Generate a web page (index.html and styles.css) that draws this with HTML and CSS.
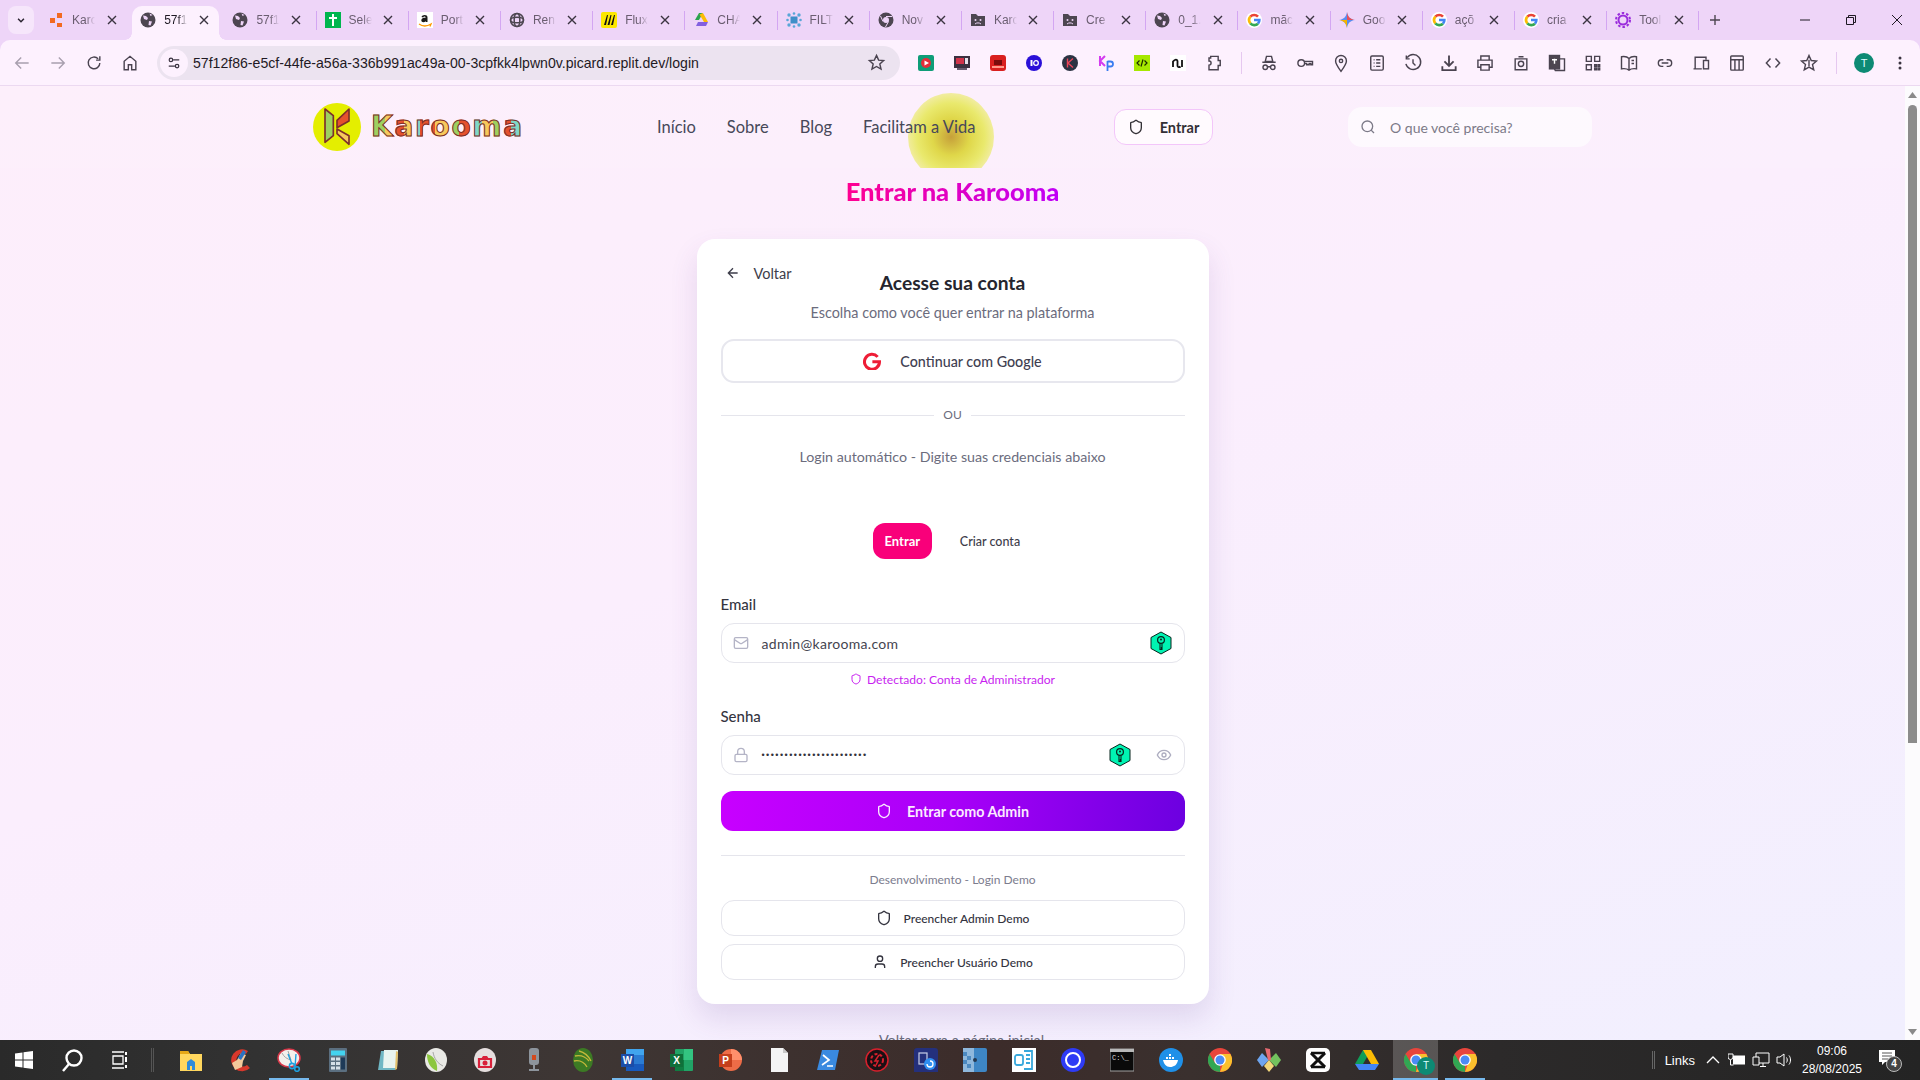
FILE: index.html
```html
<!DOCTYPE html>
<html lang="pt-BR">
<head>
<meta charset="utf-8">
<title>Entrar na Karooma</title>
<link rel="stylesheet" href="styles.css">
</head>
<body>
<svg class="defs" aria-hidden="true">
  <symbol id="shield" viewBox="0 0 24 24"><path fill="none" stroke="currentColor" stroke-width="2" d="M20 13c0 5-3.5 7.5-7.66 8.95a1 1 0 0 1-.67-.01C7.5 20.5 4 18 4 13V6a1 1 0 0 1 1-1c2 0 4.5-1.2 6.24-2.72a1.17 1.17 0 0 1 1.52 0C14.51 3.81 17 5 19 5a1 1 0 0 1 1 1z"/></symbol>
  <symbol id="globe" viewBox="0 0 16 16"><circle cx="8" cy="8" r="7.5" fill="#4d4651"/><path fill="#eed5f8" d="M3 3.5l3 .5 2 2-1 2-3-1zM9 9l3 .5-1.500 4-2-.5zM9.500 1.500l3 1.500-2 1z"/></symbol>
  <symbol id="gcol" viewBox="0 0 24 24"><circle cx="12" cy="12" r="12" fill="#fff"/><path fill="none" stroke="#ea4335" stroke-width="4" d="M18 7a8 8 0 0 0-11.500 0"/><path fill="none" stroke="#fbbc05" stroke-width="4" d="M6.500 7a8 8 0 0 0 0 10"/><path fill="none" stroke="#34a853" stroke-width="4" d="M6.500 17a8 8 0 0 0 11.500 .5"/><path fill="none" stroke="#4285f4" stroke-width="4" d="M18 17.500A8 8 0 0 0 20 12h-8"/></symbol>
  <symbol id="folder" viewBox="0 0 16 16"><path fill="#4d4651" d="M1 2h5l2 2h7v10H1z"/><circle cx="5.500" cy="8" r="1" fill="#eed5f8"/><circle cx="10.500" cy="8" r="1" fill="#eed5f8"/><path d="M5 12c1.500-1.500 4.500-1.500 6 0" stroke="#eed5f8" fill="none"/></symbol>
  <symbol id="x" viewBox="0 0 12 12"><path d="M2 2l8 8M10 2l-8 8" stroke="currentColor" stroke-width="1.400" fill="none"/></symbol>
  <symbol id="key" viewBox="0 0 22 24"><path d="M11 1l10 5.500v11L11 23 1 17.500v-11z" fill="#00f3b2" stroke="#06251d" stroke-width="1"/><circle cx="11" cy="9" r="3.400" fill="none" stroke="#06251d" stroke-width="1.200"/><circle cx="11" cy="8.500" r="1" fill="#06251d"/><path d="M10 12.500v6h2v-1h-.6v-1h.6v-4" fill="none" stroke="#06251d" stroke-width="1.100"/></symbol>
  <symbol id="chrome" viewBox="0 0 24 24"><circle cx="12" cy="12" r="12" fill="#e8453c"/><path d="M12 24A12 12 0 0 1 1.600 6L7 15l5 .5z" fill="#31a753"/><path d="M12 24A12 12 0 0 0 22.400 6H12l4 7z" fill="#fbc02d"/><circle cx="12" cy="12" r="5.800" fill="#fff"/><circle cx="12" cy="12" r="4.500" fill="#4b8bf5"/></symbol>
</svg>

<header class="tabstrip">
  <div class="tabmenu"><svg class="i10" viewBox="0 0 12 12"><path d="M2.500 4.500L6 8l3.500-3.500" stroke="#2a2430" stroke-width="1.800" fill="none"/></svg></div>
  <div class="tabs">
    <div class="tab"><svg class="fav" viewBox="0 0 16 16"><path fill="#f26a21" d="M2 6h5v5H2zM9 1h5v5H9zM9 11h5v4H9z"/></svg><span class="tt">Karc</span><svg class="cl"><use href="#x"/></svg></div>
    <div class="tab on"><svg class="fav"><use href="#globe"/></svg><span class="tt">57f1</span><svg class="cl"><use href="#x"/></svg></div>
    <div class="tab"><svg class="fav"><use href="#globe"/></svg><span class="tt">57f1</span><svg class="cl"><use href="#x"/></svg></div>
    <div class="tab"><svg class="fav" viewBox="0 0 16 16"><rect width="16" height="16" fill="#00b54f"/><path d="M7 2h2v3h3v2H9v7H7V7H4V5h3z" fill="#fff"/></svg><span class="tt">Sele</span><svg class="cl"><use href="#x"/></svg></div>
    <div class="tab"><svg class="fav" viewBox="0 0 16 16"><rect width="16" height="16" fill="#fff"/><path d="M4.500 5c.5-2.500 6-3 6 .5V10h-1.600l-.2-.8c-1.500 1.500-4.500 1.200-4.400-1 .1-2 2.500-2.500 4.300-2.400 0-1.600-2-1.500-2.500-.3z" fill="#1a1a1a"/><path d="M2 12c3.500 2.500 8 2.500 12 0l-1 2.500" stroke="#f90" fill="none" stroke-width="1.300"/></svg><span class="tt">Port</span><svg class="cl"><use href="#x"/></svg></div>
    <div class="tab"><svg class="fav" viewBox="0 0 16 16"><g fill="none" stroke="#4d4651" stroke-width="1.500"><circle cx="8" cy="8" r="6.500"/><ellipse cx="8" cy="8" rx="6.500" ry="2.800"/><ellipse cx="8" cy="8" rx="2.800" ry="6.500"/></g></svg><span class="tt">Ren</span><svg class="cl"><use href="#x"/></svg></div>
    <div class="tab"><svg class="fav" viewBox="0 0 16 16"><rect width="16" height="16" rx="2" fill="#fce800"/><path d="M3 13L6 3l1 0-2 10zM6.500 13L9.500 3l1 0-2 10zM10 13L13 3l1 0-2 10z" fill="#111"/></svg><span class="tt">Flux</span><svg class="cl"><use href="#x"/></svg></div>
    <div class="tab"><svg class="fav" viewBox="0 0 16 16"><path d="M6 1h4L6 8H2z" fill="#2aa34f"/><path d="M10 1l5 9h-4L6.500 2.500z" fill="#fbbc05"/><path d="M3 14l2-4h10l-2 4z" fill="#8360e0"/></svg><span class="tt">CHA</span><svg class="cl"><use href="#x"/></svg></div>
    <div class="tab"><svg class="fav" viewBox="0 0 16 16"><rect x="4.500" y="4.500" width="7" height="7" fill="#3f8fc8"/><g fill="#58a6d8"><circle cx="3" cy="3" r="1.700"/><circle cx="13" cy="3" r="1.700"/><circle cx="3" cy="13" r="1.700"/><circle cx="13" cy="13" r="1.700"/><circle cx="8" cy="1.500" r="1.300"/><circle cx="8" cy="14.500" r="1.300"/><circle cx="1.500" cy="8" r="1.300"/><circle cx="14.500" cy="8" r="1.300"/></g></svg><span class="tt">FILT</span><svg class="cl"><use href="#x"/></svg></div>
    <div class="tab"><svg class="fav" viewBox="0 0 16 16"><circle cx="8" cy="8" r="7.500" fill="#4d4651"/><circle cx="8" cy="8" r="3" fill="#eed5f8"/><path d="M8 4.500h6M5 9.500L2.500 4M10.500 9.500L7.500 15" stroke="#eed5f8"/></svg><span class="tt">Nov</span><svg class="cl"><use href="#x"/></svg></div>
    <div class="tab"><svg class="fav"><use href="#folder"/></svg><span class="tt">Karc</span><svg class="cl"><use href="#x"/></svg></div>
    <div class="tab"><svg class="fav"><use href="#folder"/></svg><span class="tt">Cre</span><svg class="cl"><use href="#x"/></svg></div>
    <div class="tab"><svg class="fav"><use href="#globe"/></svg><span class="tt">0_1.</span><svg class="cl"><use href="#x"/></svg></div>
    <div class="tab"><svg class="fav"><use href="#gcol"/></svg><span class="tt">mãc</span><svg class="cl"><use href="#x"/></svg></div>
    <div class="tab"><svg class="fav" viewBox="0 0 16 16"><path d="M8 0c.6 4.500 3 7.300 8 8-5 .7-7.400 3.500-8 8-.6-4.500-3-7.300-8-8 5-.7 7.400-3.500 8-8z" fill="#5a8cf0"/><path d="M8 0c.6 4.500 3 7.300 8 8H8z" fill="#e8505b"/><path d="M8 16c-.6-4.500-3-7.300-8-8h8z" fill="#f4b400"/></svg><span class="tt">Goo</span><svg class="cl"><use href="#x"/></svg></div>
    <div class="tab"><svg class="fav"><use href="#gcol"/></svg><span class="tt">açõ</span><svg class="cl"><use href="#x"/></svg></div>
    <div class="tab"><svg class="fav"><use href="#gcol"/></svg><span class="tt">cria</span><svg class="cl"><use href="#x"/></svg></div>
    <div class="tab"><svg class="fav" viewBox="0 0 16 16"><circle cx="8" cy="8" r="4.500" fill="none" stroke="#9a2cdc" stroke-width="2"/><circle cx="8" cy="8" r="7" fill="none" stroke="#9a2cdc" stroke-width="2" stroke-dasharray="2.500 2"/></svg><span class="tt">Tool</span><svg class="cl"><use href="#x"/></svg></div>
  </div>
  <svg class="newtab" viewBox="0 0 12 12"><path d="M6 1v10M1 6h10" stroke="#4d4651" stroke-width="1.400"/></svg>
  <div class="winctl">
    <svg class="i10" viewBox="0 0 10 10"><path d="M0 5h10" stroke="#1f1a24"/></svg>
    <svg class="i10" viewBox="0 0 10 10"><path d="M.5 2.500h7v7h-7zM2.500 2.500v-2h7v7h-2" stroke="#1f1a24" fill="none"/></svg>
    <svg class="i10" viewBox="0 0 10 10"><path d="M0 0l10 10M10 0L0 10" stroke="#1f1a24"/></svg>
  </div>
</header>

<nav class="toolbar">
  <div class="tbtn dim"><svg viewBox="0 0 24 24"><path d="M20 12H5m6-6.500L4.500 12l6.500 6.500"/></svg></div>
  <div class="tbtn dim"><svg viewBox="0 0 24 24"><path d="M4 12h15m-6-6.500l6.500 6.500-6.500 6.500"/></svg></div>
  <div class="tbtn"><svg viewBox="0 0 24 24"><path d="M19 12a7 7 0 1 1-2-5m2-3v4.500h-4.500"/></svg></div>
  <div class="tbtn"><svg viewBox="0 0 24 24"><path d="M5 20V10l7-6 7 6v10h-5v-6h-4v6z"/></svg></div>
  <div class="omni">
    <span class="tune"><svg viewBox="0 0 16 16"><path d="M7 4.500h7M2 11.500h7" stroke="#3a3340" fill="none" stroke-width="1.400"/><circle cx="4.500" cy="4.500" r="2" fill="none" stroke="#3a3340" stroke-width="1.400"/><circle cx="11.500" cy="11.500" r="2" fill="none" stroke="#3a3340" stroke-width="1.400"/></svg></span>
    <span class="url">57f12f86-e5cf-44fe-a56a-336b991ac49a-00-3cpfkk4lpwn0v.picard.replit.dev/login</span>
    <svg class="star" viewBox="0 0 24 24"><path d="M12 3l2.700 6 6.300.6-4.800 4.300 1.500 6.400L12 17l-5.700 3.300 1.500-6.400L3 9.600 9.300 9z"/></svg>
  </div>
  <div class="exts">
    <div class="ext"><svg viewBox="0 0 16 16"><rect width="16" height="16" rx="2" fill="#0f9d78"/><circle cx="8" cy="8" r="5" fill="#e52d3a"/><path d="M6.500 5.500L11 8l-4.500 2.500z" fill="#fff"/></svg></div>
    <div class="ext"><svg viewBox="0 0 16 16"><rect y="1" width="16" height="12" fill="#3b3040"/><rect x="2" y="3" width="8" height="6" fill="#d0334a"/><rect x="11" y="3" width="3" height="6" fill="#e8e0ea"/><rect x="3" y="13" width="10" height="2" fill="#6a5d70"/></svg></div>
    <div class="ext"><svg viewBox="0 0 16 16"><rect width="16" height="16" rx="3" fill="#d9201f"/><rect x="4" y="5" width="8" height="5" fill="#7a0c0c"/><rect x="2" y="11" width="12" height="2" fill="#ff9a8a"/></svg></div>
    <div class="ext"><svg viewBox="0 0 16 16"><circle cx="8" cy="8" r="8" fill="#2a10d8"/><rect x="4.500" y="5" width="2" height="6" fill="#fff"/><circle cx="10" cy="8" r="2.300" fill="none" stroke="#fff" stroke-width="1.300"/></svg></div>
    <div class="ext"><svg viewBox="0 0 16 16"><circle cx="8" cy="8" r="8" fill="#2b3242"/><path d="M5.500 3.500v9M11 3.500L6 8l5 4.500" stroke="#e8455a" fill="none" stroke-width="1.400"/></svg></div>
    <div class="ext"><svg viewBox="0 0 16 16"><path d="M2 1v10M7 1L2 6l5 5" stroke="#d43cf0" fill="none" stroke-width="2"/><path d="M9.500 6v10M9.500 6.500h3a2.500 2.500 0 0 1 0 5h-3" stroke="#3a7cf0" fill="none" stroke-width="1.800"/></svg></div>
    <div class="ext"><svg viewBox="0 0 16 16"><rect width="16" height="16" fill="#a6e800"/><path d="M5.500 5.500L3 8l2.500 2.500M10.500 5.500L13 8l-2.500 2.500M9 4.500L7 11.500" stroke="#1c2b00" fill="none" stroke-width="1.200"/></svg></div>
    <div class="ext"><svg viewBox="0 0 16 16"><rect width="16" height="16" fill="#fff"/><path d="M3 12V6.500C5 4 7 4 7.500 6v5c.5 1.500 2 1.500 3 .5M12 5v7" stroke="#111" fill="none" stroke-width="1.800"/></svg></div>
    <div class="tbtn ico"><svg viewBox="0 0 24 24"><path d="M8 4h9v5h2.500v6H17v5H6v-5.500a2.500 2.500 0 0 0 0-5V6h2z"/></svg></div>
    <span class="vsep"></span>
    <div class="tbtn ico"><svg viewBox="0 0 24 24"><path d="M9 4h6l1.500 6h-9zM4 11h16M10 16.500h4"/><circle cx="7.500" cy="17" r="2.700"/><circle cx="16.500" cy="17" r="2.700"/></svg></div>
    <div class="tbtn ico"><svg viewBox="0 0 24 24"><circle cx="7.500" cy="12" r="4"/><path d="M11.500 10H21v4h-2v-1.500h-2V14h-3v-1.500h-2.500"/></svg></div>
    <div class="tbtn ico"><svg viewBox="0 0 24 24"><path d="M12 22c-4-5.500-6.500-9-6.500-12.500a6.500 6.500 0 0 1 13 0C18.500 13 16 16.500 12 22z"/><circle cx="12" cy="9.500" r="2"/></svg></div>
    <div class="tbtn ico"><svg viewBox="0 0 24 24"><rect x="4.500" y="3.500" width="15" height="17" rx="1.500"/><path d="M8 8h1M11 8h5M8 12h1M11 12h5M8 16h1M11 16h5"/></svg></div>
    <div class="tbtn ico"><svg viewBox="0 0 24 24"><path d="M5 5.500A9 9 0 1 1 3.500 13M4 3v4h4M12 7.500V12l3 3"/></svg></div>
    <div class="tbtn ico"><svg viewBox="0 0 24 24"><path d="M12 3v12m-5.500-5L12 15.500 17.500 10M4 16v4.500h16V16" stroke-width="2.200"/></svg></div>
    <div class="tbtn ico"><svg viewBox="0 0 24 24"><path d="M7 8V3.500h10V8M7 17H3.500V8.500h17V17H17M7 14h10v6.500H7z"/></svg></div>
    <div class="tbtn ico"><svg viewBox="0 0 24 24"><path d="M9 4.500h6M5 7h14v13H5z"/><circle cx="12" cy="13" r="3.200"/></svg></div>
    <div class="tbtn ico"><svg viewBox="0 0 24 24"><rect x="3" y="3" width="12" height="16" fill="#4d4651"/><path d="M15 7h6v14H10l-1-2" /><path d="M6 8h6M9 7v6" stroke="#fff"/></svg></div>
    <div class="tbtn ico"><svg viewBox="0 0 24 24"><path d="M4 4h6v6H4zM14 4h6v6h-6zM4 14h6v6H4zM14 14h2v2h-2zM18 14h2v2h-2zM14 18h2v2h-2zM18 18h2v2h-2z"/></svg></div>
    <div class="tbtn ico"><svg viewBox="0 0 24 24"><path d="M12 6.500C10 4.500 6.500 4 3 4.500V19c3.500-.5 7 0 9 1.500 2-1.500 5.500-2 9-1.500V4.500c-3.500-.5-7 0-9 2zM12 6.500v14M15 9h3M15 12.500h3"/></svg></div>
    <div class="tbtn ico"><svg viewBox="0 0 24 24"><path d="M10 8H8a4 4 0 0 0 0 8h2M14 8h2a4 4 0 0 1 0 8h-2M8 12h8"/></svg></div>
    <div class="tbtn ico"><svg viewBox="0 0 24 24"><path d="M13 19H5V5h13v3M3 19h10"/><rect x="15" y="9" width="6" height="10"/></svg></div>
    <div class="tbtn ico"><svg viewBox="0 0 24 24"><rect x="4.500" y="3.500" width="15" height="17" rx="1"/><path d="M4.500 8h15M9.500 8v12.500M14.500 8v12.500"/></svg></div>
    <div class="tbtn ico"><svg viewBox="0 0 24 24"><path d="M9 6.500L4 12l5 5.500M15 6.500l5 5.500-5 5.500"/></svg></div>
    <div class="tbtn ico"><svg viewBox="0 0 24 24"><path d="M12 3l2.700 6 6.300.6-4.800 4.300 1.500 6.400L12 17l-5.700 3.300 1.500-6.400L3 9.600 9.300 9z"/><path d="M12 8v8" /></svg></div>
    <span class="vsep"></span>
    <div class="ext"><span class="avatar">T</span></div>
    <div class="ext"><svg viewBox="0 0 16 16"><circle cx="8" cy="3" r="1.500" fill="#3a3340"/><circle cx="8" cy="8" r="1.500" fill="#3a3340"/><circle cx="8" cy="13" r="1.500" fill="#3a3340"/></svg></div>
  </div>
</nav>

<div class="viewport">
  <main class="page">
    <div class="navbar">
      <span class="glow"></span>
      <div class="brand">
        <svg class="mark" viewBox="0 0 144 144"><circle cx="72" cy="72" r="72" fill="#e4ee00"/><g stroke="#7d2f2a" stroke-width="5" stroke-linejoin="round"><path d="M36 18l25 20v60l-25 20z" fill="#9ed060"/><path d="M108 18L72 52v22l36-20z" fill="#e5512d"/><path d="M72 78l36 20v26L72 92z" fill="#f7c95c"/></g></svg>
        <span class="wordmark">Karooma</span>
      </div>
      <div class="menu"><a>Início</a><a>Sobre</a><a>Blog</a><a>Facilitam a Vida</a></div>
      <button class="loginbtn"><svg class="ic16"><use href="#shield"/></svg>Entrar</button>
      <div class="search"><svg class="ic16" viewBox="0 0 24 24"><circle cx="11" cy="11" r="8" fill="none" stroke="currentColor" stroke-width="2"/><path d="M21 21l-4.300-4.300" stroke="currentColor" stroke-width="2"/></svg><span>O que você precisa?</span></div>
    </div>

    <h1 class="pagetitle">Entrar na Karooma</h1>

    <section class="card">
      <div class="head">
        <a class="back"><svg class="ic16" viewBox="0 0 24 24"><path d="M12 19l-7-7 7-7M19 12H5" fill="none" stroke="currentColor" stroke-width="2"/></svg>Voltar</a>
        <h2 class="cardtitle">Acesse sua conta</h2>
      </div>
      <p class="sub">Escolha como você quer entrar na plataforma</p>
      <button class="google"><svg class="ic18" viewBox="0 0 24 24"><path d="M19.500 6.500A10 10 0 1 0 22 13H12.500" fill="none" stroke="#ee1d36" stroke-width="4"/></svg>Continuar com Google</button>
      <div class="or"><span>OU</span></div>
      <p class="auto">Login automático - Digite suas credenciais abaixo</p>
      <div class="switch"><button class="sw-on">Entrar</button><button class="sw-off">Criar conta</button></div>

      <label class="lab lab-email">Email</label>
      <div class="field">
        <svg class="ic16 fic" viewBox="0 0 24 24"><rect x="2" y="4" width="20" height="16" rx="2" fill="none" stroke="currentColor" stroke-width="2"/><path d="M22 7l-8.970 5.700a1.940 1.940 0 0 1-2.060 0L2 7" fill="none" stroke="currentColor" stroke-width="2"/></svg>
        <span class="val">admin@karooma.com</span>
        <svg class="keyb"><use href="#key"/></svg>
      </div>
      <p class="detected"><svg class="ic12"><use href="#shield"/></svg>Detectado: Conta de Administrador</p>
      <label class="lab lab-pass">Senha</label>
      <div class="field">
        <svg class="ic16 fic" viewBox="0 0 24 24"><rect x="3" y="11" width="18" height="11" rx="2" fill="none" stroke="currentColor" stroke-width="2"/><path d="M7 11V7a5 5 0 0 1 10 0v4" fill="none" stroke="currentColor" stroke-width="2"/></svg>
        <span class="val dots">•••••••••••••••••••••••</span>
        <svg class="keyb"><use href="#key"/></svg>
        <svg class="ic16 eye" viewBox="0 0 24 24"><path d="M2 12s3-7 10-7 10 7 10 7-3 7-10 7-10-7-10-7z" fill="none" stroke="currentColor" stroke-width="2"/><circle cx="12" cy="12" r="3" fill="none" stroke="currentColor" stroke-width="2"/></svg>
      </div>
      <button class="adminbtn"><svg class="ic16"><use href="#shield"/></svg>Entrar como Admin</button>
      <hr class="rule">
      <p class="devnote">Desenvolvimento - Login Demo</p>
      <button class="demo demo1"><svg class="ic16"><use href="#shield"/></svg>Preencher Admin Demo</button>
      <button class="demo demo2"><svg class="ic16" viewBox="0 0 24 24"><path d="M19 21v-2a4 4 0 0 0-4-4H9a4 4 0 0 0-4 4v2" fill="none" stroke="currentColor" stroke-width="2"/><circle cx="12" cy="7" r="4" fill="none" stroke="currentColor" stroke-width="2"/></svg>Preencher Usuário Demo</button>
    </section>
    <a class="homelink">Voltar para a página inicial</a>
  </main>
  <aside class="scrollbar">
    <svg class="arrow" viewBox="0 0 9 6"><path d="M4.500 0L9 6H0z"/></svg>
    <span class="thumb"></span>
    <span class="spacer"></span>
    <svg class="arrow" viewBox="0 0 9 6"><path d="M0 0h9L4.500 6z"/></svg>
  </aside>
</div>

<footer class="taskbar">
  <div class="sys"><svg viewBox="0 0 20 20"><path fill="#fff" d="M1 3.500l7.500-1v7H1zM9.500 2.300L19 1v8.500H9.500zM1 10.500h7.500v7L1 16.500zM9.500 10.500H19V19l-9.500-1.300z"/></svg></div>
  <div class="sys"><svg viewBox="0 0 24 24"><circle cx="14" cy="10" r="7.500" fill="none" stroke="#fff" stroke-width="2.400"/><path d="M9 16L3 23" stroke="#fff" stroke-width="2.400"/></svg></div>
  <div class="sys"><svg viewBox="0 0 20 20"><path d="M2 2h12M2 18h12M3 6h10v8H3z" stroke="#fff" fill="none" stroke-width="1.300"/><path d="M16 2v3M16 7v5M16 15v3" stroke="#fff" stroke-width="2"/></svg></div>
  <span class="tsep"></span>
  <div class="apps">
    <div class="app"><svg viewBox="0 0 24 24"><path d="M1 3h8l2 3h12v17H1z" fill="#ffd75e"/><path d="M1 3h8l2 3H1z" fill="#e6a817"/><path d="M8 22v-8l4-3 4 3v8h-3v-4h-2v4z" fill="#2e8bd8"/></svg></div>
    <div class="app"><svg viewBox="0 0 24 24"><path d="M20 3a11 11 0 1 0 2 17l-3-3a6.500 6.500 0 1 1-1-11z" fill="#d8382c"/><path d="M13 5L9 12l-5 3 3 7 7-3 1-6 3-6z" fill="#f3c89b"/><path d="M15 2l3 2-5 8-3-2z" fill="#2a72c4"/></svg></div>
    <div class="app on"><svg viewBox="0 0 24 24"><ellipse cx="12" cy="10" rx="11" ry="9" fill="#f4f0ec" stroke="#d8384a" stroke-width="1.500"/><path d="M5 5c2 4 5 6 9 7l-3-9" fill="none" stroke="#a4a4a4"/><circle cx="15" cy="18" r="2.600" fill="none" stroke="#1ea0e0" stroke-width="1.600"/><circle cx="20" cy="21" r="2.300" fill="none" stroke="#1ea0e0" stroke-width="1.600"/><path d="M11 6l4 10M19 6l-1 13" stroke="#1ea0e0" stroke-width="1.400"/></svg></div>
    <div class="app"><svg viewBox="0 0 24 24"><rect x="3" y="0" width="18" height="24" rx="1" fill="#5b6f80"/><rect x="5" y="2.500" width="14" height="5" fill="#43d3f0"/><g fill="#d6e0e8"><rect x="5" y="9.500" width="4" height="3"/><rect x="10" y="9.500" width="4" height="3"/><rect x="5" y="14" width="4" height="3"/><rect x="10" y="14" width="4" height="3"/><rect x="5" y="18.500" width="4" height="3"/><rect x="10" y="18.500" width="4" height="3"/></g><rect x="15" y="9.500" width="4" height="12" fill="#1d3a58"/></svg></div>
    <div class="app"><svg viewBox="0 0 24 24"><path d="M6 3h16l-2 19H3z" fill="#6fb7c4"/><path d="M9 2h14l-1 18H8z" fill="#e8f4f0"/><path d="M21 3l2 1-1 17-2 1z" fill="#e3c16b"/></svg></div>
    <div class="app"><svg viewBox="0 0 24 24"><ellipse cx="12" cy="12" rx="11" ry="12" fill="#e9e9e5"/><path d="M3 6c0 8 3 14 10 17 1-7-2-15-10-17z" fill="#8cc63f"/><path d="M9 4c1 6 4 11 10 14" stroke="#a7a7a7" fill="none"/></svg></div>
    <div class="app"><svg viewBox="0 0 24 24"><ellipse cx="12" cy="12" rx="11" ry="12" fill="#e6dfdf"/><path d="M6 11h12v8H6z" fill="none" stroke="#d8203a" stroke-width="2.200"/><circle cx="12" cy="15" r="2.500" fill="#d8203a"/><path d="M8 11l2-3h4l2 3" fill="#d8203a"/></svg></div>
    <div class="app"><svg viewBox="0 0 24 24"><rect x="7" y="0" width="10" height="17" rx="3" fill="#8d949c"/><rect x="10" y="7" width="4" height="5" fill="#d24a1f"/><path d="M12 17v4M7 22h10" stroke="#8d949c" stroke-width="2"/></svg></div>
    <div class="app"><svg viewBox="0 0 24 24"><ellipse cx="12" cy="12" rx="10" ry="12" fill="#3c7a24"/><path d="M4 8c5-1 10 0 14 5M3 13c5-1 10 1 13 6M8 3c4 1 9 4 12 10" stroke="#c4b83a" fill="none" stroke-width="1.300"/></svg></div>
    <div class="app on"><svg viewBox="0 0 24 24"><rect x="6" y="1" width="18" height="22" rx="1" fill="#2b7cd3"/><rect x="6" y="1" width="18" height="6" fill="#41a5ee"/><rect x="6" y="16" width="18" height="7" fill="#185abd"/><rect x="1" y="6" width="13" height="13" fill="#1b4da8"/><text class="oftxt" x="7.500" y="16">W</text></svg></div>
    <div class="app"><svg viewBox="0 0 24 24"><rect x="6" y="1" width="18" height="22" rx="1" fill="#21a366"/><rect x="15" y="1" width="9" height="11" fill="#33c481"/><rect x="6" y="12" width="9" height="11" fill="#107c41"/><rect x="1" y="6" width="13" height="13" fill="#0f6f3a"/><text class="oftxt" x="7.500" y="16">X</text></svg></div>
    <div class="app"><svg viewBox="0 0 24 24"><circle cx="13" cy="12" r="11" fill="#ed6c47"/><path d="M13 1a11 11 0 0 1 11 11H13z" fill="#ff8f6b"/><rect x="1" y="6" width="13" height="13" fill="#c43e1c"/><text class="oftxt" x="7.500" y="16">P</text></svg></div>
    <div class="app"><svg viewBox="0 0 24 24"><path d="M4 0h12l5 5v19H4z" fill="#f4f4f4"/><path d="M16 0l5 5h-5z" fill="#c8c8c8"/></svg></div>
    <div class="app"><svg viewBox="0 0 24 24"><path d="M6 2h17l-4 20H1z" fill="#3a8ae0"/><path d="M7 7l6 5-7 5M11 18h6" stroke="#fff" fill="none" stroke-width="1.700"/></svg></div>
    <div class="app"><svg viewBox="0 0 24 24"><circle cx="12" cy="12" r="11" fill="#1a1014" stroke="#d6202c" stroke-width="1.500"/><circle cx="12" cy="12" r="6" fill="none" stroke="#d6202c" stroke-width="2" stroke-dasharray="3 2"/><path d="M14 7l-4 6h3l-2 4" stroke="#d6202c" fill="none" stroke-width="1.500"/></svg></div>
    <div class="app"><svg viewBox="0 0 24 24"><rect width="24" height="26" rx="3" fill="#24307c"/><rect x="5" y="5" width="8" height="11" fill="none" stroke="#c9cfe8" stroke-width="1.200"/><circle cx="16" cy="16" r="6" fill="#2f8ff0"/><path d="M13 16a3 3 0 1 0 3-3" stroke="#fff" fill="none" stroke-width="1.300"/></svg></div>
    <div class="app"><svg viewBox="0 0 24 24"><rect width="24" height="24" rx="2" fill="#3e86c4"/><path d="M0 0h11v24H0z" fill="#8fb8dc"/><path d="M0 4h4v4H0zM4 8h4v4H4zM0 12h4v4H0zM4 16h4v4H4z" fill="#4c89c0"/><circle cx="12" cy="12" r="2" fill="#243a52"/></svg></div>
    <div class="app"><svg viewBox="0 0 24 24"><rect width="24" height="24" fill="#fff"/><rect x="3" y="7" width="8" height="10" rx="2" fill="none" stroke="#39a8dc" stroke-width="1.800"/><path d="M12 3h8v18h-8M14 7h4M14 11h4M14 15h4" fill="none" stroke="#39a8dc" stroke-width="1.800"/></svg></div>
    <div class="app"><svg viewBox="0 0 24 24"><circle cx="12" cy="12" r="12" fill="#2e3bf5"/><circle cx="12" cy="12" r="7" fill="none" stroke="#fff" stroke-width="2"/></svg></div>
    <div class="app"><svg viewBox="0 0 24 24"><rect y="1" width="24" height="22" fill="#0a0a0a" stroke="#a0a0a0"/><rect y="1" width="24" height="3" fill="#b8b8b8"/><text class="cmd" x="2" y="12">C:\_</text></svg></div>
    <div class="app"><svg viewBox="0 0 24 24"><circle cx="12" cy="12" r="12" fill="#1f90e8"/><path d="M4 12h15c-1 5-4 7-8 7-4 0-6-3-7-7z" fill="#fff"/><path d="M7 9h2v2H7zM10 9h2v2h-2zM13 9h2v2h-2zM10 6h2v2h-2z" fill="#fff"/></svg></div>
    <div class="app"><svg viewBox="0 0 24 24"><use href="#chrome"/></svg></div>
    <div class="app"><svg viewBox="0 0 24 24"><path d="M5 5l7 7-7 7-5-7z" fill="#6ea5ef"/><path d="M19 5l5 7-5 7-7-7z" fill="#73c25e"/><path d="M12 12l5 6-5 6-5-6z" fill="#f2d77a"/><path d="M8 0l5 1 1 11h-3z" fill="#e86a72"/></svg></div>
    <div class="app"><svg viewBox="0 0 24 24"><rect width="24" height="24" rx="5" fill="#fff"/><path d="M5 5l14 14M19 5L5 19" stroke="#111" stroke-width="3"/><path d="M5 5h14M5 19h14" stroke="#111" stroke-width="2.400"/></svg></div>
    <div class="app"><svg viewBox="0 0 24 24"><path d="M8 2h8L8 16H0z" fill="#0f9d58"/><path d="M16 2l8 14h-8L8 2z" fill="#fbbc05"/><path d="M0 16h24l-4 6H4z" fill="#4285f4"/></svg></div>
    <div class="app active"><svg viewBox="0 0 24 24"><use href="#chrome"/></svg><span class="tbadge">T</span></div>
    <div class="app on"><svg viewBox="0 0 24 24"><use href="#chrome"/></svg></div>
  </div>
  <div class="tray">
    <span class="tsep2"></span>
    <span class="links">Links</span>
    <svg class="tr" viewBox="0 0 16 16"><path d="M2 11l6-6 6 6" stroke="#fff" fill="none" stroke-width="1.300"/></svg>
    <svg class="tr" viewBox="0 0 18 16"><rect x="5.500" y="4" width="11" height="8" fill="#fff" stroke="#fff"/><path d="M0 2h5v3a2.500 2.500 0 0 1-5 0zM2.500 8v5h3" stroke="#fff" fill="none"/></svg>
    <svg class="tr" viewBox="0 0 18 16"><path d="M4 5V1h13v10H7M1 5h6v8H1zM11 11v3M8 14.500h6" stroke="#fff" fill="none"/></svg>
    <svg class="tr" viewBox="0 0 18 16"><path d="M1 5h3l4-3v12l-4-3H1zM10.500 5.500c1 1.500 1 3.500 0 5M13 3.500c2 2.500 2 6.500 0 9" stroke="#fff" fill="none"/></svg>
    <div class="clock"><span>09:06</span><span>28/08/2025</span></div>
    <div class="notif"><svg viewBox="0 0 16 16"><path d="M0 0h16v12H6l-3 3v-3H0z" fill="#fff"/><path d="M3 3h10M3 6h10M3 9h6" stroke="#555"/></svg><span class="nbadge">4</span></div>
  </div>
</footer>
</body>
</html>
```

FILE: styles.css
```css
* { box-sizing: border-box; margin: 0; padding: 0; }
html, body { width: 1920px; height: 1080px; overflow: hidden; }
body { display: flex; flex-direction: column; font-family: "Lato", "Liberation Sans", sans-serif; background: #eed5f8; }
.defs { width: 0; height: 0; display: block; position: absolute; }
button { font-family: inherit; cursor: pointer; background: none; border: 0; }
svg { display: block; flex: none; }

/* Tab strip */
.tabstrip { height: 40px; flex: none; background: #eed5f8; display: flex; align-items: center; font-family: "Liberation Sans", sans-serif; }
.tabmenu { width: 26px; height: 28px; margin-left: 8px; margin-right: 6px; background: #f6e6fb; border-radius: 8px; display: flex; align-items: center; justify-content: center; flex: none; }
.i10 { width: 10px; height: 10px; }
.tabs { display: flex; height: 40px; }
.tab { position: relative; width: 92.2px; flex: none; display: flex; align-items: center; padding-left: 8px; font-size: 12px; color: #6a5d70; }
.tab:nth-child(n+3)::after { content: ""; position: absolute; right: 0; top: 11px; height: 19px; width: 1px; background: #d3a6f2; }
.tab.on { width: 87px; margin-right: 5.2px; margin-top: 6px; height: 34px; padding-bottom: 6px; background: #fdf1fe; color: #1f1a24; border-radius: 10px 10px 0 0; }
.tab.on::before, .tab.on::after { content: ""; position: absolute; bottom: 0; width: 7px; height: 7px; }
.tab.on::before { left: -7px; background: radial-gradient(circle at 0 0, transparent 6.500px, #fdf1fe 7px); }
.tab.on::after { right: -7px; background: radial-gradient(circle at 100% 0, transparent 6.500px, #fdf1fe 7px); }
.fav { width: 16px; height: 16px; flex: none; }
.tt { width: 23px; margin-left: 8px; margin-right: 10.500px; white-space: nowrap; -webkit-mask-image: linear-gradient(90deg, #000 60%, transparent); mask-image: linear-gradient(90deg, #000 60%, transparent); }
.cl { width: 12px; height: 12px; color: #3a3340; flex: none; }
.newtab { width: 12px; height: 12px; margin-left: 9.500px; }
.winctl { margin-left: auto; display: flex; gap: 36px; padding-right: 18px; }

/* Toolbar */
.toolbar { height: 46px; flex: none; background: #fdf1fe; border-bottom: 1px solid #ecd9f1; display: flex; align-items: center; padding-left: 4px; border-radius: 10px 10px 0 0; }
.tbtn { width: 36px; height: 34px; display: flex; align-items: center; justify-content: center; flex: none; }
.tbtn svg { width: 20px; height: 20px; fill: none; stroke: #4a4350; stroke-width: 1.700; }
.tbtn.dim svg { stroke: #a89fae; }
.omni { width: 743px; height: 34px; margin-left: 9px; background: #ece3f0; border-radius: 17px; display: flex; align-items: center; padding: 0 14px 0 3px; font-family: "Liberation Sans", sans-serif; font-size: 14.100px; color: #1f1a24; flex: none; }
.tune { width: 28px; height: 28px; border-radius: 50%; background: #fdf1fe; display: flex; align-items: center; justify-content: center; }
.tune svg { width: 14px; height: 14px; }
.url { margin-left: 5px; flex: 1; white-space: nowrap; }
.star { width: 19px; height: 19px; fill: none; stroke: #4a4350; stroke-width: 1.800; }
.exts { display: flex; align-items: center; margin-left: 8px; }
.ext { width: 36px; height: 34px; display: flex; align-items: center; justify-content: center; flex: none; }
.ext svg { width: 16px; height: 16px; }
.vsep { width: 1px; height: 22px; background: #e6c8f0; margin: 0 9px; flex: none; }
.avatar { width: 20px; height: 20px; border-radius: 50%; background: #0d8a74; color: #dff; font: 11px "Liberation Sans", sans-serif; display: flex; align-items: center; justify-content: center; }

/* Viewport */
.viewport { height: 954px; flex: none; display: flex; overflow: hidden; }
.page { position: relative; width: 1905px; height: 954px; overflow: hidden; background: linear-gradient(160deg, #fdeefb 0%, #fbeefd 45%, #f1effe 100%); display: flex; flex-direction: column; }
.scrollbar { width: 15px; background: #fcfbfd; display: flex; flex-direction: column; align-items: center; padding: 6px 0 5px; }
.arrow { width: 9px; height: 6px; fill: #8a8a8a; flex: none; }
.thumb { width: 9px; height: 638px; margin-top: 7px; border-radius: 5px 5px 0 0; background: #8c8c8c; }
.spacer { flex: 1; }

/* Navbar */
.navbar { position: relative; height: 82px; flex: none; display: flex; align-items: center; padding-left: 313px; background: rgba(255, 255, 255, .1); overflow: hidden; }
.brand { width: 344px; display: flex; align-items: center; gap: 10px; flex: none; }
.mark { width: 48px; height: 48px; }
.wordmark { font: bold 28px/1 "DejaVu Sans", sans-serif; letter-spacing: 1.700px; width: 152px; color: transparent; white-space: nowrap;
  background: linear-gradient(90deg, #9ed060 0 9%, #f7c95c 9% 14%, #e5512d 14% 22%, #f7c95c 22% 28%, #7fd8c8 28% 32%, #e5512d 32% 42%, #f7c95c 42% 52%, #9ed060 52% 58%, #e5512d 58% 68%, #7fd8c8 68% 73%, #f7c95c 73% 80%, #9ed060 80% 86%, #e5512d 86% 92%, #7fd8c8 92% 100%);
  -webkit-background-clip: text; background-clip: text; -webkit-text-stroke: 1px #7d2f2a; }
.menu { position: relative; display: flex; gap: 31px; font-size: 16.500px; color: #474859; width: 457px; flex: none; }
.loginbtn { width: 99px; height: 36px; border: 1px solid #f3c6fa; border-radius: 12px; background: #fffafe; display: flex; align-items: center; justify-content: center; gap: 16px; font-size: 14.500px; font-weight: 700; color: #333036; flex: none; }
.ic16 { width: 16px; height: 16px; flex: none; }
.ic18 { width: 18px; height: 18px; flex: none; }
.ic12 { width: 12px; height: 12px; flex: none; }
.search { width: 244px; height: 40px; margin-left: 135px; border-radius: 14px; background: rgba(255, 255, 255, .6); display: flex; align-items: center; gap: 14px; padding-left: 12px; font-size: 14px; color: #7c7a88; flex: none; }
.glow { position: absolute; left: 908px; top: 7px; width: 86px; height: 88px; border-radius: 50%; background: radial-gradient(circle, rgba(198, 160, 58, 1) 0%, rgba(222, 214, 66, .96) 30%, rgba(230, 232, 84, .85) 55%, rgba(238, 238, 110, .4) 82%, rgba(240, 240, 120, 0) 100%); pointer-events: none; }

.pagetitle { margin-top: 7px; height: 32px; font-size: 25.500px; line-height: 32px; font-weight: 900; text-align: center; color: transparent; background: linear-gradient(90deg, #ff0090 0, #c000f8 100%) center / 214px 100% no-repeat; -webkit-background-clip: text; background-clip: text; flex: none; }

/* Card */
.card { width: 512px; flex: none; margin: 32px auto 0; background: #fff; border-radius: 18px; padding: 24px; box-shadow: 0 14px 28px rgba(90, 60, 140, .14); color: #2d2d38; display: flex; flex-direction: column; }
.head { display: grid; }
.back { grid-area: 1 / 1; justify-self: start; display: flex; align-items: center; gap: 13px; height: 20px; padding-left: 4px; font-size: 14.500px; color: #3d3d4a; }
.cardtitle { grid-area: 1 / 1; margin-top: 6px; font-size: 19.200px; line-height: 28px; font-weight: 700; text-align: center; color: #25252e; }
.sub { margin-top: 6px; font-size: 14.400px; line-height: 20px; text-align: center; color: #6b6c7d; }
.google { margin-top: 16px; height: 44px; border: 2px solid #e7e7ee; border-radius: 13px; display: flex; align-items: center; justify-content: center; gap: 19px; font-size: 14.300px; color: #3f4152; font-weight: 500; }
.or { margin-top: 23px; height: 16px; display: flex; align-items: center; gap: 9px; font-size: 12px; color: #6b6c7d; }
.or::before, .or::after { content: ""; flex: 1; height: 1px; background: #e5e5ec; position: relative; top: 1px; }
.auto { margin-top: 25px; font-size: 14.250px; line-height: 20px; text-align: center; color: #6b6c7d; }
.switch { margin-top: 56px; height: 36px; display: flex; justify-content: center; align-items: center; gap: 28px; }
.sw-on { width: 59px; height: 36px; border-radius: 12px; background: #f9007a; color: #fff; font-size: 13px; font-weight: 700; }
.sw-off { font-size: 12.500px; color: #3d3d4a; font-weight: 500; margin-right: 12px; }
.lab { font-size: 15px; line-height: 20px; color: #35353f; font-weight: 500; display: block; }
.lab-email { margin-top: 35px; }
.lab-pass { margin-top: 19px; }
.field { margin-top: 9px; height: 40px; border: 1px solid #e5e5ec; border-radius: 13px; display: flex; align-items: center; padding: 0 11.500px 0 11px; }
.fic { color: #b4b4c6; }
.val { margin-left: 13px; flex: 1; font-size: 14px; letter-spacing: .3px; color: #44444f; }
.dots { font: 9px "Liberation Sans", sans-serif; letter-spacing: 1.460px; color: #33333c; }
.keyb { width: 22px; height: 24px; color: #000; }
.eye { margin-left: 25px; color: #adadc0; }
.detected { margin-top: 8px; height: 16px; display: flex; align-items: center; justify-content: center; gap: 5px; font-size: 12.100px; color: #c81ef0; }
.adminbtn { margin-top: 16px; height: 40px; border-radius: 12px; background: linear-gradient(95deg, #c800ff 0%, #a800f8 50%, #6c00e0 100%); color: #fbeaff; display: flex; align-items: center; justify-content: center; gap: 15px; font-size: 14.300px; font-weight: 700; }
.rule { margin-top: 24px; height: 1px; border: 0; background: #e5e5ec; }
.devnote { margin-top: 16px; font-size: 12px; line-height: 16px; text-align: center; color: #7c7c8e; }
.demo { height: 36px; border: 1px solid #e5e5ec; border-radius: 13px; display: flex; align-items: center; justify-content: center; gap: 12px; font-size: 12px; font-weight: 500; color: #33333e; }
.demo1 { margin-top: 12px; }
.demo2 { margin-top: 8px; }
.homelink { margin-top: 27px; padding-left: 18px; font-size: 14.500px; line-height: 20px; text-align: center; color: #6b6c7d; flex: none; }

/* Taskbar */
.taskbar { height: 40px; flex: none; display: flex; align-items: center; background: linear-gradient(90deg, #2a2a2a 0%, #333 15%, #3e3634 30%, #3c2c2a 52%, #3a302e 62%, #2c2a2a 78%, #242424 100%); }
.sys { width: 48px; height: 40px; display: flex; align-items: center; justify-content: center; flex: none; }
.sys svg { width: 20px; height: 20px; }
.sys:nth-child(2) svg { width: 24px; height: 24px; }
.tsep { width: 3px; height: 24px; margin: 0 12px 0 7px; border-left: 1px solid #555; border-right: 1px solid #555; flex: none; }
.apps { display: flex; height: 40px; }
.app { position: relative; width: 49px; height: 40px; display: flex; align-items: center; justify-content: center; flex: none; }
.app svg { width: 24px; height: 24px; }
.app.on { background: linear-gradient(#76b9ed, #76b9ed) center bottom / 40px 2px no-repeat; }
.app.active { background: linear-gradient(#76b9ed, #76b9ed) center bottom / 45px 2px no-repeat, linear-gradient(rgba(255, 255, 255, .2), rgba(255, 255, 255, .2)) center / 45px 40px no-repeat; }
.oftxt { font: bold 10px "Liberation Sans", sans-serif; fill: #fff; text-anchor: middle; }
.cmd { font: 7px "Liberation Mono", monospace; fill: #ddd; }
.tbadge { position: absolute; left: 26px; top: 17px; width: 18px; height: 18px; border-radius: 50%; background: #0d8a74; color: #dff; font: 10px/18px "Liberation Sans", sans-serif; text-align: center; }
.tray { margin-left: auto; display: flex; align-items: center; color: #fff; font: 12px "Liberation Sans", sans-serif; flex: none; }
.tsep2 { width: 3px; height: 18px; border-left: 1px solid #666; border-right: 1px solid #666; margin-right: 10px; }
.links { margin-right: 9px; font-size: 13px; }
.tr { width: 18px; height: 16px; margin-right: 6px; }
.clock { width: 64px; margin: 0 15px 0 0; display: flex; flex-direction: column; align-items: center; gap: 4px; line-height: 14px; }
.notif { position: relative; width: 20px; height: 20px; margin-right: 21px; }
.notif svg { width: 16px; height: 16px; }
.nbadge { position: absolute; left: 7px; top: 6px; width: 16px; height: 16px; border-radius: 50%; background: #444; border: 1px solid #bbb; font: bold 10px/14px "Liberation Sans", sans-serif; text-align: center; }
```
